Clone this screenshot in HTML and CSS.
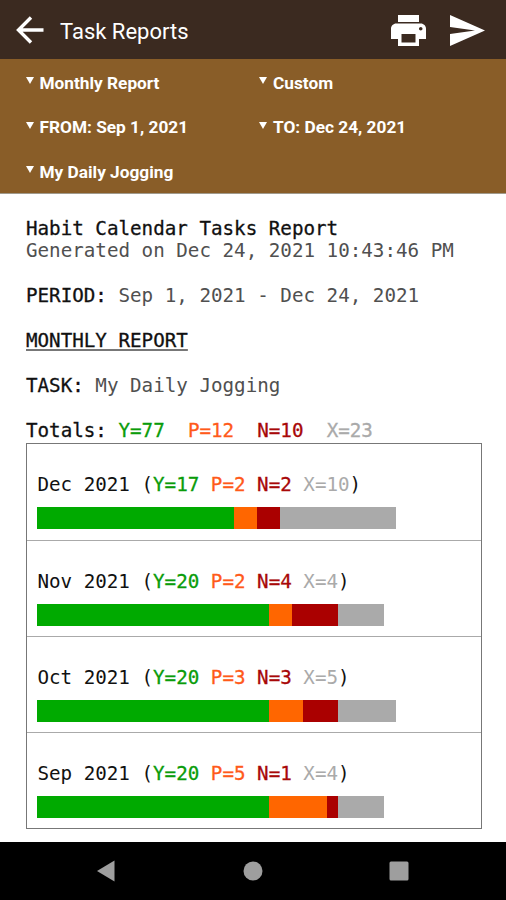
FILE: index.html
```
<!DOCTYPE html>
<html lang="en">
<head>
  <meta charset="UTF-8">
  <title>Task Reports</title>
  <link rel="stylesheet" href="styles.css">
</head>
<body>
  <header class="topbar">
    <svg class="back" viewBox="0 0 28 28" width="28" height="28"><path d="M27.500 14H3M15 1.500L2.500 14L15 26.500" fill="none" stroke="#fff" stroke-width="3.400"/></svg>
    <h1>Task Reports</h1>
    <svg class="print" viewBox="2 3 20 18" width="35" height="31" preserveAspectRatio="none"><path fill="#fff" d="M19 8H5c-1.66 0-3 1.34-3 3v6h4v4h12v-4h4v-6c0-1.66-1.34-3-3-3zm-3 11H8v-5h8v5zm3-7c-.55 0-1-.45-1-1s.45-1 1-1 1 .45 1 1-.45 1-1 1zm-1-9H6v4h12V3z"/></svg>
    <svg class="send" viewBox="2 3 21 18" width="35" height="31" preserveAspectRatio="none"><path fill="#fff" d="M2.01 21L23 12 2.01 3 2 10l15 2-15 2z"/></svg>
  </header>

  <div class="filters">
    <div class="filter">Monthly Report</div>
    <div class="filter">Custom</div>
    <div class="filter">FROM: Sep 1, 2021</div>
    <div class="filter">TO: Dec 24, 2021</div>
    <div class="filter">My Daily Jogging</div>
  </div>

  <main class="report">
    <p><b>Habit Calendar Tasks Report</b></p>
    <p class="gap">Generated on Dec 24, 2021 10:43:46 PM</p>
    <p class="gap"><b>PERIOD:</b> Sep 1, 2021 - Dec 24, 2021</p>
    <p class="gap"><b class="underline">MONTHLY REPORT</b></p>
    <p class="gap"><b>TASK:</b> My Daily Jogging</p>
    <p class="totals"><b>Totals: <span class="y">Y=77</span>  <span class="p">P=12</span>  <span class="n">N=10</span>  <span class="x">X=23</span></b></p>

    <div class="months">
      <div class="month">
        <p>Dec 2021 (<span class="y">Y=17</span> <span class="p">P=2</span> <span class="n">N=2</span> <span class="x">X=10</span>)</p>
        <div class="bar"><i class="yes" style="--n:17"></i><i class="part" style="--n:2"></i><i class="no" style="--n:2"></i><i class="skip" style="--n:10"></i></div>
      </div>
      <div class="month">
        <p>Nov 2021 (<span class="y">Y=20</span> <span class="p">P=2</span> <span class="n">N=4</span> <span class="x">X=4</span>)</p>
        <div class="bar"><i class="yes" style="--n:20"></i><i class="part" style="--n:2"></i><i class="no" style="--n:4"></i><i class="skip" style="--n:4"></i></div>
      </div>
      <div class="month">
        <p>Oct 2021 (<span class="y">Y=20</span> <span class="p">P=3</span> <span class="n">N=3</span> <span class="x">X=5</span>)</p>
        <div class="bar"><i class="yes" style="--n:20"></i><i class="part" style="--n:3"></i><i class="no" style="--n:3"></i><i class="skip" style="--n:5"></i></div>
      </div>
      <div class="month">
        <p>Sep 2021 (<span class="y">Y=20</span> <span class="p">P=5</span> <span class="n">N=1</span> <span class="x">X=4</span>)</p>
        <div class="bar"><i class="yes" style="--n:20"></i><i class="part" style="--n:5"></i><i class="no" style="--n:1"></i><i class="skip" style="--n:4"></i></div>
      </div>
    </div>
  </main>

  <nav class="navbar">
    <svg viewBox="0 0 20 22" width="20" height="22"><path d="M1 11L18.500 0.500V21.500Z" fill="#9e9e9e"/></svg>
    <svg viewBox="0 0 20 20" width="20" height="20"><circle cx="10" cy="10" r="9.500" fill="#9e9e9e"/></svg>
    <svg viewBox="0 0 20 20" width="20" height="20"><rect x="0.500" y="0.500" width="19" height="19" rx="1.500" fill="#9e9e9e"/></svg>
  </nav>
</body>
</html>
```
FILE: styles.css
```
* {
  box-sizing: border-box;
}
body {
  margin: 0;
  height: 900px;
  display: flex;
  flex-direction: column;
  overflow: hidden;
  background: #fff;
  font-family: Roboto, sans-serif;
}
.topbar {
  height: 59px;
  flex: none;
  display: flex;
  align-items: center;
  padding: 1px 21px 0 16px;
  background: #3b2a20;
  color: #fff;
}
.topbar h1 {
  flex: 1;
  margin: 2px 0 0 16px;
  font-size: 22px;
  font-weight: 400;
}
.send {
  margin-left: 24px;
}
.filters {
  height: 135px;
  flex: none;
  display: grid;
  grid-template-columns: 233.5px 1fr;
  grid-template-rows: repeat(3, 44.5px);
  padding: 1.5px 0 0 25.5px;
  background: #895d28;
  border-bottom: 1px solid #a09a8c;
  color: #fff;
  font-size: 17.25px;
  font-weight: 700;
}
.filter {
  display: flex;
  align-items: center;
  gap: 6px;
  white-space: nowrap;
}
.filter::before {
  content: "";
  margin-top: -4px;
  border: 4.5px solid transparent;
  border-top: 7px solid #fff;
  border-bottom: 0;
}
.report {
  flex: none;
  height: 647.5px;
  padding: 23.5px 24px 0 26px;
  font-family: "Droid Sans Mono", "DejaVu Sans Mono", monospace;
  font-size: 19.22px;
  line-height: 22.5px;
  color: #505050;
}
.report p {
  margin: 0;
  white-space: pre;
}
.report .gap {
  margin-bottom: 22.5px;
}
.report b {
  font-weight: 400;
  color: #111;
  -webkit-text-stroke: 0.3px;
}
.report .underline {
  text-decoration: underline;
  text-decoration-color: #777;
  text-decoration-thickness: 2px;
  text-underline-offset: 2px;
}
.report .y {
  color: #0a9c0a;
}
.report .p {
  color: #ff5a1a;
}
.report .n {
  color: #a80808;
}
.report .x {
  color: #aaa;
}
.months {
  border: 1px solid #777;
}
.month {
  height: 96.2px;
  padding: 30px 11px 0 10.4px;
  color: #111;
}
.month .y,
.month .p,
.month .n {
  -webkit-text-stroke: 0.3px;
}
.month + .month {
  border-top: 1px solid #aaa;
}
.bar {
  display: flex;
  height: 22px;
  margin-top: 10.5px;
}
.bar i {
  width: calc(var(--n) * 11.57px);
}
.yes {
  background: #00aa00;
}
.part {
  background: #ff6600;
}
.no {
  background: #aa0000;
}
.skip {
  background: #aaa;
}
.navbar {
  flex: 1;
  display: flex;
  justify-content: space-between;
  align-items: center;
  padding: 0 97px 0 96px;
  background: #000;
}
```
